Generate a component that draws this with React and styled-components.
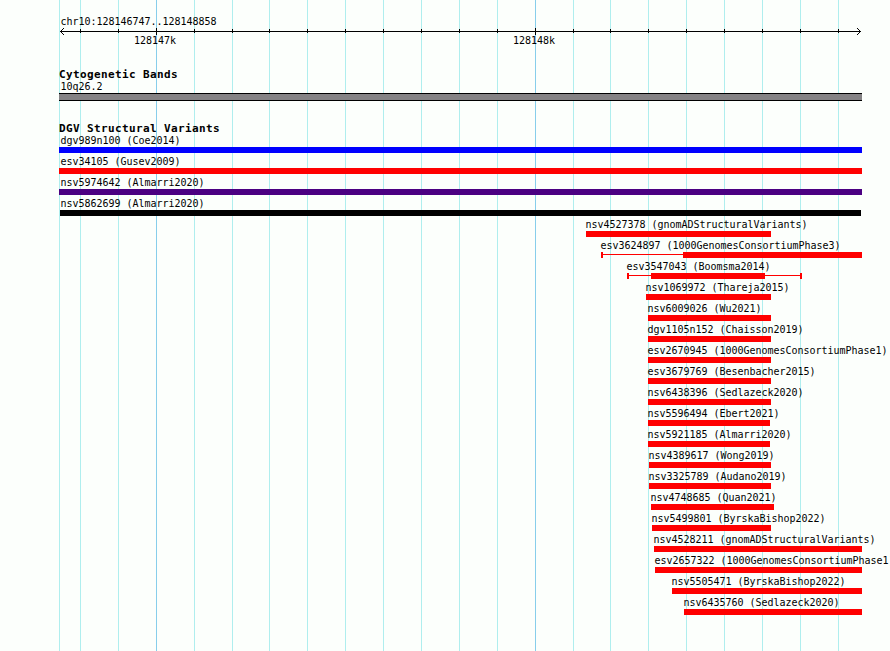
import React from 'react'
import styled, { createGlobalStyle } from 'styled-components'

const GlobalStyle = createGlobalStyle`
body {
  margin: 0;
  background: #fcfffc;
}
`

const Browser = styled.div`
position: relative;
width: 890px;
height: 651px;
overflow: hidden;
background: #fcfffc;
color: #000;
font-family: "DejaVu Sans Mono", monospace;
font-size: 10px;
`

const Grid = styled.svg`
position: absolute;
top: 0;
left: 0;
shape-rendering: crispEdges;
`

const Tracks = styled.div`
position: relative;
display: flex;
flex-flow: column;
width: 829px;
padding: 16px 0 0 59px;
`

const Label = styled.div`
height: 12px;
margin-left: ${props => props.$indent || 0}px;
line-height: 12px;
letter-spacing: -0.02px;
white-space: pre;
`

const Scale = styled.svg`
display: block;
height: 8px;
margin-top: -1px;
shape-rendering: crispEdges;
`

const Ticks = styled.div`
display: flex;
height: 12px;
padding-left: 75px;
gap: 337px;
`

const Title = styled.h2`
height: 12px;
margin: 22px 0 0;
font-size: 11px;
font-weight: bold;
line-height: 12px;
letter-spacing: 0.378px;
white-space: pre;
`

const Band = styled.div`
width: 803px;
height: 6px;
border-top: 1px solid #000;
border-bottom: 1px solid #000;
background: #848284;
`

const Variant = styled.div`
height: 21px;
`

const Glyph = styled.div`
display: flex;
align-items: flex-start;
height: 6px;
margin-left: ${props => props.$indent}px;
`

const Bar = styled.div`
width: ${props => props.$width}px;
height: 6px;
background: ${props => props.$color};
`

const Cap = styled.div`
width: 2px;
height: 6px;
background: #f00;
`

const Whisker = styled.div`
width: ${props => props.$width}px;
height: 1px;
margin-top: 2px;
background: #f00;
`

const LEFT = 59

const minor = [59, 80, 118, 194, 232, 269, 307, 345, 383, 421, 459, 497, 573, 610, 648, 686, 724, 762, 800, 838]
const major = [156, 535]

// start and end are the bar, from and to the outer range when it is wider
const variants = [
  { name: 'dgv989n100 (Coe2014)', start: 59, end: 862, color: '#00f', label: 60 },
  { name: 'esv34105 (Gusev2009)', start: 59, end: 862, label: 60 },
  { name: 'nsv5974642 (Almarri2020)', start: 59, end: 862, color: '#4b0082', label: 60 },
  { name: 'nsv5862699 (Almarri2020)', start: 60, end: 861, color: '#000', label: 60 },
  { name: 'nsv4527378 (gnomADStructuralVariants)', start: 586, end: 771 },
  { name: 'esv3624897 (1000GenomesConsortiumPhase3)', from: 601, start: 683, end: 862 },
  { name: 'esv3547043 (Boomsma2014)', from: 627, start: 651, end: 765, to: 802 },
  { name: 'nsv1069972 (Thareja2015)', start: 646, end: 771 },
  { name: 'nsv6009026 (Wu2021)', start: 648, end: 771 },
  { name: 'dgv1105n152 (Chaisson2019)', start: 648, end: 771 },
  { name: 'esv2670945 (1000GenomesConsortiumPhase1)', start: 648, end: 771 },
  { name: 'esv3679769 (Besenbacher2015)', start: 648, end: 771 },
  { name: 'nsv6438396 (Sedlazeck2020)', start: 648, end: 771 },
  { name: 'nsv5596494 (Ebert2021)', start: 648, end: 770 },
  { name: 'nsv5921185 (Almarri2020)', start: 648, end: 770 },
  { name: 'nsv4389617 (Wong2019)', start: 649, end: 771 },
  { name: 'nsv3325789 (Audano2019)', start: 649, end: 771 },
  { name: 'nsv4748685 (Quan2021)', start: 651, end: 774 },
  { name: 'nsv5499801 (ByrskaBishop2022)', start: 652, end: 771 },
  { name: 'nsv4528211 (gnomADStructuralVariants)', start: 654, end: 862 },
  { name: 'esv2657322 (1000GenomesConsortiumPhase1)', start: 655, end: 862 },
  { name: 'nsv5505471 (ByrskaBishop2022)', start: 672, end: 862 },
  { name: 'nsv6435760 (Sedlazeck2020)', start: 684, end: 862 },
]

const GridLines = () => (
  <Grid width="890" height="651">
    {minor.map(x => <rect key={x} x={x} y="0" width="1" height="651" fill="#afeeee" />)}
    {major.map(x => <rect key={x} x={x} y="0" width="1" height="651" fill="#87ceeb" />)}
  </Grid>
)

const Ruler = () => (
  <Scale width="804" height="8" viewBox="59 27 804 8">
    <rect x="60" y="31" width="801" height="1" />
    {minor.slice(1).map(x => <rect key={x} x={x} y="29" width="1" height="4" />)}
    {major.map(x => <rect key={x} x={x} y="28" width="1" height="7" />)}
    {[1, 2, 3].map(d => (
      <g key={d}>
        <rect x={60 + d} y={31 - d} width="1" height="1" />
        <rect x={60 + d} y={31 + d} width="1" height="1" />
        <rect x={860 - d} y={31 - d} width="1" height="1" />
        <rect x={860 - d} y={31 + d} width="1" height="1" />
      </g>
    ))}
  </Scale>
)

const VariantRow = ({ name, start, end, from, to, label, color = '#f00' }) => {
  const left = from || start
  return (
    <Variant>
      <Label $indent={(label || left - 1) + 0.4 - LEFT}>{name}</Label>
      <Glyph $indent={left - LEFT}>
        {from && <Cap />}
        {from && <Whisker $width={start - from - 2} />}
        <Bar $width={end - start} $color={color} />
        {to && <Whisker $width={to - end - 2} />}
        {to && <Cap />}
      </Glyph>
    </Variant>
  )
}

const App = () => (
  <>
    <GlobalStyle />
    <Browser>
      <GridLines />
      <Tracks>
        <Label $indent={1.4}>chr10:128146747..128148858</Label>
        <Ruler />
        <Ticks>
          <Label>128147k</Label>
          <Label>128148k</Label>
        </Ticks>

        <Title>Cytogenetic Bands</Title>
        <Label $indent={1.4}>10q26.2</Label>
        <Band />

        <Title>DGV Structural Variants</Title>
        {variants.map(v => <VariantRow key={v.name} {...v} />)}
      </Tracks>
    </Browser>
  </>
)

export default App
